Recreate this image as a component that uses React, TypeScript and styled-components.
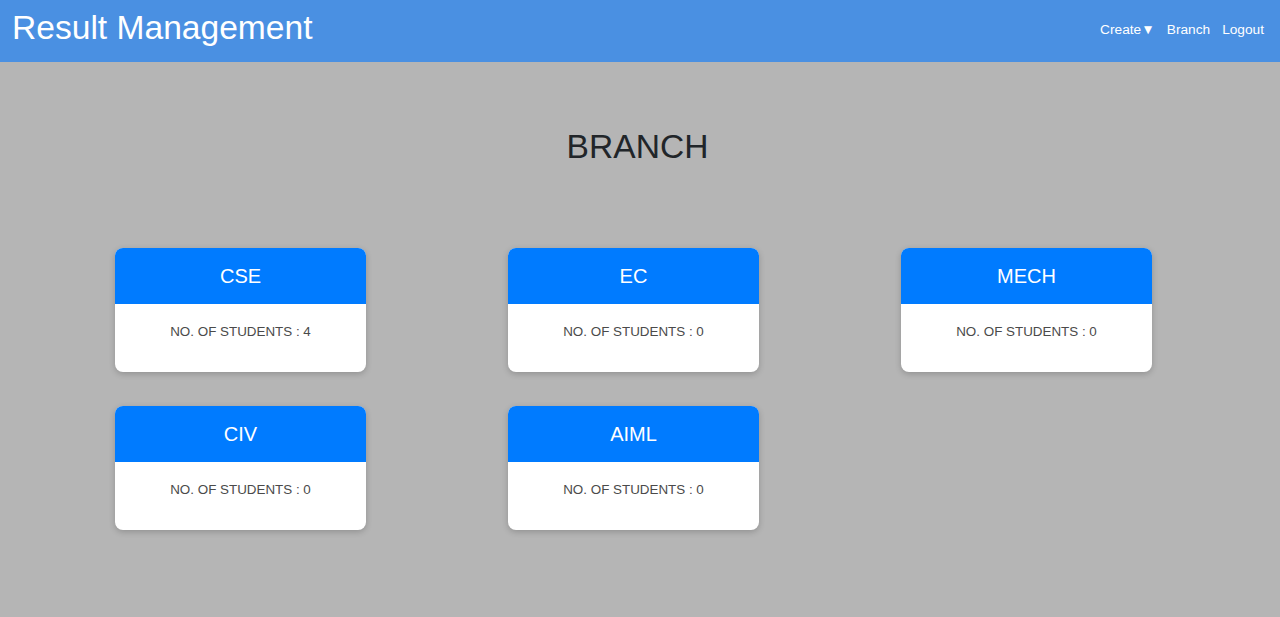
import React from "react";
import styled, { createGlobalStyle } from "styled-components";

const Global = createGlobalStyle`
  html, body { margin: 0; padding: 0; }
  body {
    background: #b5b5b5;
    font-family: "Liberation Sans", Arial, sans-serif;
    min-height: 617px;
  }
`;

const Header = styled.header`
  height: 62px;
  background: #4a90e2;
  display: flex;
  align-items: center;
  justify-content: space-between;
  padding: 0 16px 0 12px;
  box-sizing: border-box;
`;

const Brand = styled.div`
  color: #fff;
  font-size: 33.6px;
  line-height: 1;
  margin-top: -6px;
`;

const Nav = styled.nav`
  display: flex;
  align-items: center;
  gap: 12px;
  margin-top: -3px;
`;

const NavLink = styled.a`
  color: #fff;
  font-size: 13.7px;
  text-decoration: none;
  cursor: pointer;
`;

const Main = styled.main`
  display: flex;
  flex-direction: column;
  align-items: center;
  padding-top: 65px;
`;

const Title = styled.h1`
  margin: 0;
  font-size: 33.6px;
  font-weight: 400;
  color: #212529;
  line-height: 40px;
  margin-left: -5px;
`;

const Grid = styled.div`
  display: grid;
  grid-template-columns: repeat(3, 251px);
  column-gap: 142px;
  row-gap: 34px;
  margin-top: 81px;
  margin-left: -13px;
`;

const Card = styled.div`
  width: 251px;
  height: 124px;
  border-radius: 8px;
  background: #fff;
  overflow: hidden;
  box-shadow: 0 2px 6px rgba(0, 0, 0, 0.2);
  display: flex;
  flex-direction: column;
`;

const CardHead = styled.div`
  height: 56px;
  background: #007bff;
  color: #fff;
  font-size: 20px;
  display: flex;
  align-items: center;
  justify-content: center;
`;

const CardBody = styled.div`
  flex: 1;
  color: #4a4a4a;
  font-size: 13.4px;
  text-align: center;
  padding-top: 20px;
`;

const branches = [
  { name: "CSE", count: 4 },
  { name: "EC", count: 0 },
  { name: "MECH", count: 0 },
  { name: "CIV", count: 0 },
  { name: "AIML", count: 0 },
];

export default function App() {
  return (
    <>
      <Global />
      <Header>
        <Brand>Result Management</Brand>
        <Nav>
          <NavLink>Create▼</NavLink>
          <NavLink>Branch</NavLink>
          <NavLink>Logout</NavLink>
        </Nav>
      </Header>
      <Main>
        <Title>BRANCH</Title>
        <Grid>
          {branches.map((b) => (
            <Card key={b.name}>
              <CardHead>{b.name}</CardHead>
              <CardBody>NO. OF STUDENTS : {b.count}</CardBody>
            </Card>
          ))}
        </Grid>
      </Main>
    </>
  );
}
